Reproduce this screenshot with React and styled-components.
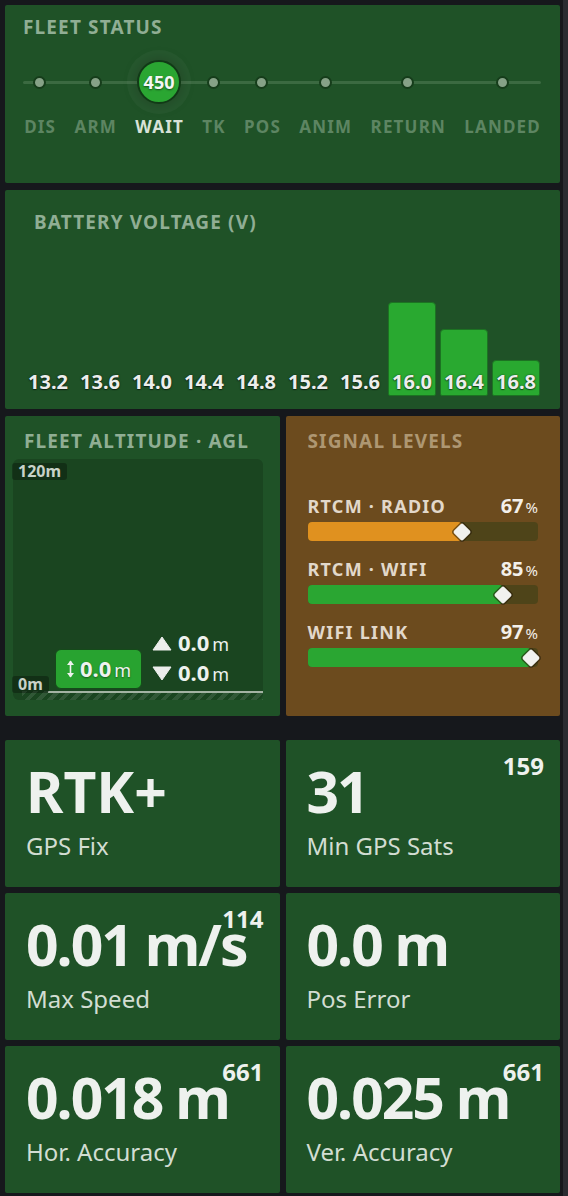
import React from 'react';
import styled, { createGlobalStyle } from 'styled-components';

const GlobalStyle = createGlobalStyle`
  body {
    margin: 0;
    background: linear-gradient(to left, #2a2c31 5px, #16181c 5px);
    font-family: 'Noto Sans', 'Open Sans', sans-serif;
    color: #eaeeea;
  }
`;

const Page = styled.main`
  padding: 5px 8px 3px 5px;
  display: flex;
  flex-direction: column;
  gap: 7px;
`;

const Panel = styled.section`
  box-sizing: border-box;
  background: ${props => (props.$tone === 'amber' ? '#6c4b1e' : '#1f5227')};
  border-radius: 2px;
`;

const PanelTitle = styled.h2`
  margin: 0;
  font-size: 19px;
  line-height: 22px;
  font-weight: 700;
  letter-spacing: 0.06em;
  white-space: nowrap;
  text-transform: uppercase;
  color: ${props => (props.$tone === 'amber' ? '#ae9772' : '#90ae94')};
`;

/* fleet status */

const StatusPanel = styled(Panel)`
  height: 178px;
  padding: 11px 19px 0 18px;
`;

const Stepper = styled.ol`
  list-style: none;
  margin: 22px 0 0;
  padding: 0;
  display: flex;
  justify-content: space-between;
  position: relative;

  &::before {
    content: '';
    position: absolute;
    left: 0;
    right: 0;
    top: 20.5px;
    height: 3px;
    border-radius: 2px;
    background: #3b6a41;
  }
`;

const Step = styled.li`
  display: flex;
  flex-direction: column;
  align-items: center;
  position: relative;
`;

const DotSlot = styled.div`
  height: 44px;
  display: flex;
  align-items: center;
  justify-content: center;
`;

const Dot = styled.span`
  width: 13px;
  height: 13px;
  box-sizing: border-box;
  border-radius: 50%;
  background: #86a287;
  border: 2px solid #163d1b;
`;

const ActiveDot = styled.span`
  width: 44px;
  height: 44px;
  box-sizing: border-box;
  border-radius: 50%;
  background: #2aa632;
  border: 2px solid #113a16;
  box-shadow: 0 0 0 10px rgba(255, 255, 255, 0.035), 0 0 14px rgba(0, 0, 0, 0.25);
  display: flex;
  align-items: center;
  justify-content: center;
  font-size: 18px;
  font-weight: 700;
  color: #f4f7f4;
  text-shadow: 0 1px 2px rgba(0, 0, 0, 0.5);
`;

const StepLabel = styled.span`
  margin-top: 13px;
  padding-left: 0.07em;
  font-size: 17px;
  line-height: 20px;
  font-weight: 700;
  letter-spacing: 0.07em;
  color: ${props => (props.$active ? '#d8e2d8' : '#5d8562')};
`;

/* battery */

const BatteryPanel = styled(Panel)`
  height: 219px;
  padding: 21px 20px 13px 19px;
  display: flex;
  flex-direction: column;
`;

const BatteryTitle = styled(PanelTitle)`
  margin-left: 10px;
`;

const Bars = styled.div`
  flex: 1;
  display: flex;
  gap: 4px;
`;

const BarColumn = styled.div`
  flex: 1;
  display: grid;
  align-items: end;
`;

const Bar = styled.div`
  grid-area: 1 / 1;
  box-sizing: border-box;
  background: #29a930;
  border: 1px solid #1c7322;
  border-radius: 4px 4px 2px 2px;
`;

const BarLabel = styled.span`
  grid-area: 1 / 1;
  position: relative;
  padding-bottom: 3px;
  text-align: center;
  font-size: 20px;
  line-height: 22px;
  font-weight: 700;
  color: #eceeec;
  text-shadow: 0 0 2px rgba(0, 0, 0, 0.6), 0 1px 1px rgba(0, 0, 0, 0.5);
`;

/* altitude + signals */

const SplitRow = styled.div`
  display: grid;
  grid-template-columns: 1fr 1fr;
  gap: 6px;
  height: 300px;
`;

const AltitudePanel = styled(Panel)`
  padding: 14px 17px 16px 8px;
  display: flex;
  flex-direction: column;
`;

const AltitudeTitle = styled(PanelTitle)`
  margin-left: 11px;
`;

const AltChart = styled.div`
  position: relative;
  flex: 1;
  margin-top: 7px;
  border-radius: 6px;
  background: #1a4520;
`;

const AxisTag = styled.span`
  position: absolute;
  left: -1px;
  ${props => (props.$bottom ? 'bottom: 7px;' : 'top: 4px;')}
  padding: 0 6px;
  border-radius: 3px;
  background: rgba(0, 0, 0, 0.3);
  font-size: 16px;
  line-height: 17px;
  font-weight: 700;
  color: #c8d2c8;
`;

const Ground = styled.div`
  position: absolute;
  left: 9px;
  right: 0;
  bottom: 0;
  height: 9px;
  background: repeating-linear-gradient(
    135deg,
    rgba(255, 255, 255, 0.1) 0 4px,
    transparent 4px 8px
  );

  &::before {
    content: '';
    position: absolute;
    left: 26px;
    right: 0;
    top: 0;
    height: 2px;
    background: #a3b3a3;
  }
`;

const Marker = styled.div`
  position: absolute;
  left: 42px;
  bottom: 11px;
  display: flex;
  align-items: flex-end;
  gap: 10px;
`;

const AltBadge = styled.div`
  box-sizing: border-box;
  width: 87px;
  height: 40px;
  border-radius: 6px;
  background: #28a330;
  border: 1.5px solid #154a1a;
  display: flex;
  align-items: center;
  justify-content: center;
  gap: 5px;
  color: #eef2ee;
  text-shadow: 0 1px 2px rgba(0, 0, 0, 0.45);
`;

const Reading = styled.span`
  display: inline-flex;
  align-items: baseline;
  gap: 3px;
`;

const ReadNum = styled.span`
  font-size: 22px;
  line-height: 24px;
  font-weight: 700;
`;

const ReadUnit = styled.span`
  font-size: 18px;
  line-height: 24px;
`;

const Readouts = styled.div`
  margin-bottom: 3px;
  display: flex;
  flex-direction: column;
  gap: 4px;
  color: #eef2ee;
`;

const ReadoutRow = styled.div`
  display: flex;
  align-items: center;
  gap: 6px;
`;

const SignalPanel = styled(Panel)`
  padding: 14px 22px 0 22px;
`;

const SignalList = styled.div`
  margin-top: 44px;
  display: flex;
  flex-direction: column;
  gap: 18px;
`;

const SignalHead = styled.div`
  display: flex;
  justify-content: space-between;
  align-items: baseline;
`;

const SignalName = styled.span`
  font-size: 18px;
  line-height: 20px;
  font-weight: 700;
  letter-spacing: 0.07em;
  color: #e2d8ca;
`;

const SignalValue = styled.span`
  font-size: 20px;
  line-height: 20px;
  font-weight: 700;
  color: #f3f0ea;

  small {
    margin-left: 2px;
    font-size: 15px;
    font-weight: 400;
  }
`;

const Track = styled.div`
  position: relative;
  margin-top: 5px;
  height: 19px;
  border-radius: 4px;
  background: #4e4419;
`;

const Fill = styled.div`
  height: 100%;
  border-radius: 4px;
  background: ${props => props.$color};
`;

const Thumb = styled.span`
  position: absolute;
  top: 50%;
  width: 13px;
  height: 13px;
  border-radius: 2px;
  background: #f1f1ef;
  box-shadow: 0 0 0 1.5px rgba(40, 30, 10, 0.55);
  transform: translate(-50%, -50%) rotate(45deg);
`;

/* stat cards */

const StatGrid = styled.div`
  margin-top: 17px;
  display: grid;
  grid-template-columns: 1fr 1fr;
  grid-auto-rows: 147px;
  gap: 6px;
`;

const StatCard = styled(Panel)`
  position: relative;
  padding: 23px 16px 0 21px;
`;

const StatValue = styled.div`
  font-size: 57px;
  line-height: 1;
  font-weight: 700;
  white-space: nowrap;
  letter-spacing: ${props => (props.$numeric ? '-0.035em' : '0')};
  color: #eef1ee;
`;

const StatLabel = styled.div`
  margin-top: 12px;
  font-size: 24px;
  line-height: 28px;
  color: #d2ddd2;
`;

const StatCount = styled.span`
  position: absolute;
  top: 12px;
  right: 16px;
  font-size: 24px;
  line-height: 28px;
  font-weight: 700;
  color: #eef1ee;
`;

const steps = ['DIS', 'ARM', 'WAIT', 'TK', 'POS', 'ANIM', 'RETURN', 'LANDED'];

const voltages = [
  { v: '13.2', h: 0 },
  { v: '13.6', h: 0 },
  { v: '14.0', h: 0 },
  { v: '14.4', h: 0 },
  { v: '14.8', h: 0 },
  { v: '15.2', h: 0 },
  { v: '15.6', h: 0 },
  { v: '16.0', h: 94 },
  { v: '16.4', h: 67 },
  { v: '16.8', h: 36 },
];

const signals = [
  { name: 'RTCM · RADIO', pct: 67, color: '#e0911f' },
  { name: 'RTCM · WIFI', pct: 85, color: '#2aa632' },
  { name: 'WIFI LINK', pct: 97, color: '#2aa632' },
];

const stats = [
  { value: 'RTK+', label: 'GPS Fix' },
  { value: '31', label: 'Min GPS Sats', count: 159 },
  { value: '0.01 m/s', label: 'Max Speed', count: 114 },
  { value: '0.0 m', label: 'Pos Error' },
  { value: '0.018 m', label: 'Hor. Accuracy', count: 661 },
  { value: '0.025 m', label: 'Ver. Accuracy', count: 661 },
];

function Triangle({ down }) {
  return (
    <svg width="20" height="15" viewBox="0 0 20 15">
      <path
        d={down ? 'M1 1 H19 L10 14 Z' : 'M10 1 L19 14 H1 Z'}
        fill="#eceeec"
        stroke="#eceeec"
        strokeWidth="1"
        strokeLinejoin="round"
      />
    </svg>
  );
}

function UpDown() {
  return (
    <svg width="9" height="20" viewBox="0 0 9 20">
      <path d="M4.5 2 V18" stroke="#eef2ee" strokeWidth="1.6" />
      <path d="M1 6 L4.5 1.5 L8 6 Z M1 14 L4.5 18.5 L8 14 Z" fill="#eef2ee" />
    </svg>
  );
}

export default function App() {
  const activeStep = 2;

  return (
    <>
      <GlobalStyle />
      <Page>
        <StatusPanel>
          <PanelTitle>Fleet Status</PanelTitle>
          <Stepper>
            {steps.map((step, i) => (
              <Step key={step}>
                <DotSlot>
                  {i === activeStep ? <ActiveDot>450</ActiveDot> : <Dot />}
                </DotSlot>
                <StepLabel $active={i === activeStep}>{step}</StepLabel>
              </Step>
            ))}
          </Stepper>
        </StatusPanel>

        <BatteryPanel>
          <BatteryTitle>Battery Voltage (V)</BatteryTitle>
          <Bars>
            {voltages.map(col => (
              <BarColumn key={col.v}>
                {col.h > 0 && <Bar style={{ height: col.h }} />}
                <BarLabel>{col.v}</BarLabel>
              </BarColumn>
            ))}
          </Bars>
        </BatteryPanel>

        <SplitRow>
          <AltitudePanel>
            <AltitudeTitle>Fleet Altitude · AGL</AltitudeTitle>
            <AltChart>
              <AxisTag>120m</AxisTag>
              <Ground />
              <AxisTag $bottom>0m</AxisTag>
              <Marker>
                <AltBadge>
                  <UpDown />
                  <Reading>
                    <ReadNum>0.0</ReadNum>
                    <ReadUnit>m</ReadUnit>
                  </Reading>
                </AltBadge>
                <Readouts>
                  <ReadoutRow>
                    <Triangle />
                    <Reading>
                      <ReadNum>0.0</ReadNum>
                      <ReadUnit>m</ReadUnit>
                    </Reading>
                  </ReadoutRow>
                  <ReadoutRow>
                    <Triangle down />
                    <Reading>
                      <ReadNum>0.0</ReadNum>
                      <ReadUnit>m</ReadUnit>
                    </Reading>
                  </ReadoutRow>
                </Readouts>
              </Marker>
            </AltChart>
          </AltitudePanel>

          <SignalPanel $tone="amber">
            <PanelTitle $tone="amber">Signal Levels</PanelTitle>
            <SignalList>
              {signals.map(s => (
                <div key={s.name}>
                  <SignalHead>
                    <SignalName>{s.name}</SignalName>
                    <SignalValue>
                      {s.pct}
                      <small>%</small>
                    </SignalValue>
                  </SignalHead>
                  <Track>
                    <Fill $color={s.color} style={{ width: `${s.pct}%` }} />
                    <Thumb style={{ left: `${s.pct}%` }} />
                  </Track>
                </div>
              ))}
            </SignalList>
          </SignalPanel>
        </SplitRow>

        <StatGrid>
          {stats.map(stat => (
            <StatCard key={stat.label}>
              <StatValue $numeric={/^\d/.test(stat.value)}>{stat.value}</StatValue>
              <StatLabel>{stat.label}</StatLabel>
              {stat.count && <StatCount>{stat.count}</StatCount>}
            </StatCard>
          ))}
        </StatGrid>
      </Page>
    </>
  );
}
